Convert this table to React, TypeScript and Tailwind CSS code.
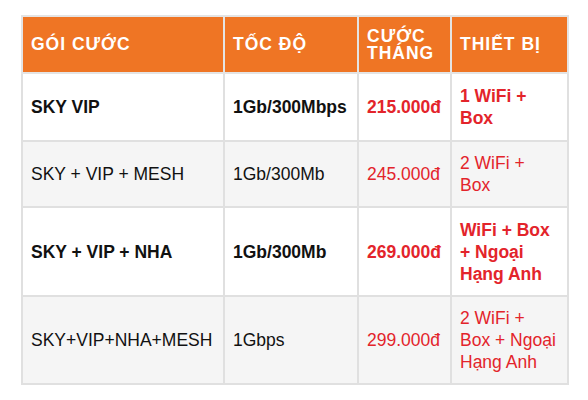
import React from "react";

interface Plan {
  name: string;
  speed: string;
  price: string;
  device: string;
  bold: boolean;
  rowClass: string;
}

const plans: Plan[] = [
  { name: "SKY VIP", speed: "1Gb/300Mbps", price: "215.000đ", device: "1 WiFi + Box", bold: true, rowClass: "h-[68px] bg-white" },
  { name: "SKY + VIP + MESH", speed: "1Gb/300Mb", price: "245.000đ", device: "2 WiFi + Box", bold: false, rowClass: "h-[66px] bg-[#f5f5f5]" },
  { name: "SKY + VIP + NHA", speed: "1Gb/300Mb", price: "269.000đ", device: "WiFi + Box + Ngoại Hạng Anh", bold: true, rowClass: "h-[89px] bg-white" },
  { name: "SKY+VIP+NHA+MESH", speed: "1Gbps", price: "299.000đ", device: "2 WiFi + Box + Ngoại Hạng Anh", bold: false, rowClass: "h-[88px] bg-[#f5f5f5]" },
];

const App = () => {
  return (
    <div
      className="w-[588px] h-[400px] bg-white pl-[21px] pt-[15px]"
      style={{ fontFamily: '"Liberation Sans", Arial, sans-serif' }}
    >
      <table className="table-fixed border-collapse w-[546px] text-[17.5px] text-[#111]">
        <colgroup>
          <col className="w-[202px]" />
          <col className="w-[134px]" />
          <col className="w-[93px]" />
          <col className="w-[117px]" />
        </colgroup>
        <thead>
          <tr className="h-[57px] bg-[#ef7524] text-white font-bold tracking-[1px] text-left">
            <th className="border-2 border-[#e4e4e4] px-[8px] leading-[17px] font-bold">GÓI CƯỚC</th>
            <th className="border-2 border-[#e4e4e4] px-[8px] leading-[17px] font-bold">TỐC ĐỘ</th>
            <th className="border-2 border-[#e4e4e4] px-[8px] leading-[17px] font-bold">CƯỚC THÁNG</th>
            <th className="border-2 border-[#e4e4e4] px-[8px] leading-[17px] font-bold">THIẾT BỊ</th>
          </tr>
        </thead>
        <tbody>
          {plans.map((p) => (
            <tr key={p.name} className={`${p.rowClass} ${p.bold ? "font-bold" : "font-normal"}`}>
              <td className="border-2 border-[#e0e0e0] px-[8px] py-[10px] leading-[22px]">{p.name}</td>
              <td className="border-2 border-[#e0e0e0] px-[8px] py-[10px] leading-[22px]">{p.speed}</td>
              <td className="border-2 border-[#e0e0e0] px-[8px] py-[10px] leading-[22px] text-[#e3242b]">{p.price}</td>
              <td className="border-2 border-[#e0e0e0] px-[8px] py-[10px] leading-[22px] text-[#e3242b]">{p.device}</td>
            </tr>
          ))}
        </tbody>
      </table>
    </div>
  );
};

export default App;
